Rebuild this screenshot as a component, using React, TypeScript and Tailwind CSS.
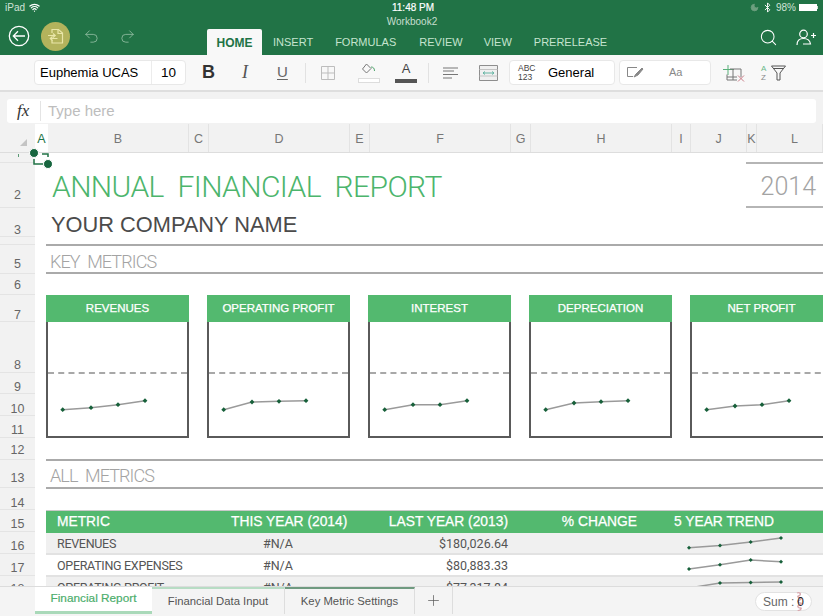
import React from "react";
import { Undo2, Redo2, Search, Plus, Bluetooth, Moon, Wifi } from "lucide-react";

const rowHeaders = [
  { label: "", h: "h-[10px]" },
  { label: "2", h: "h-[45px]", pb: "pb-[6px]" },
  { label: "3", h: "h-[29px]", pb: "pb-0" },
  { label: "", h: "h-[8px]" },
  { label: "5", h: "h-[29px]", pb: "pb-[3px]" },
  { label: "6", h: "h-[21px]", pb: "pb-[3px]" },
  { label: "7", h: "h-[27px]", pb: "pb-0" },
  { label: "8", h: "h-[51px]", pb: "pb-[1px]" },
  { label: "9", h: "h-[21px]", pb: "pb-0" },
  { label: "10", h: "h-[22px]", pb: "pb-0" },
  { label: "11", h: "h-[22px]", pb: "pb-[1px]" },
  { label: "12", h: "h-[22px]", pb: "pb-[3px]" },
  { label: "13", h: "h-[28px]", pb: "pb-[3px]" },
  { label: "14", h: "h-[22px]", pb: "pb-0" },
  { label: "15", h: "h-[22px]", pb: "pb-[1px]" },
  { label: "16", h: "h-[22px]", pb: "pb-[1px]" },
  { label: "17", h: "h-[22px]", pb: "pb-[1px]" },
  { label: "18", h: "h-[22px]" },
];

const columns = [
  { label: "A", w: "w-[13px]", active: true },
  { label: "B", w: "w-[141px]" },
  { label: "C", w: "w-[20px]" },
  { label: "D", w: "w-[141px]" },
  { label: "E", w: "w-[20px]" },
  { label: "F", w: "w-[141px]" },
  { label: "G", w: "w-[20px]" },
  { label: "H", w: "w-[141px]" },
  { label: "I", w: "w-[19px]" },
  { label: "J", w: "w-[56px]" },
  { label: "K", w: "w-[10px]" },
  { label: "L", w: "w-[66px] pl-[10px]" },
];

const xs = [16.7, 45, 72, 99];

const cards = [
  { title: "REVENUES", ys: [87.7, 85.7, 82.7, 78.7] },
  { title: "OPERATING PROFIT", ys: [87.7, 80, 79.3, 78.7] },
  { title: "INTEREST", ys: [87.7, 82.7, 82.7, 78.7] },
  { title: "DEPRECIATION", ys: [87.7, 81, 79.7, 78.7] },
  { title: "NET PROFIT", ys: [87.7, 84, 82.7, 78.7] },
];

const rows = [
  { name: "REVENUES", last: "$180,026.64", shade: true, ys: [14.7, 12.5, 9, 5] },
  { name: "OPERATING EXPENSES", last: "$80,883.33", shade: false, ys: [14, 9.7, 5, 6.7] },
  { name: "OPERATING PROFIT", last: "$77,317.84", shade: true, ys: [11, 6, 5.5, 5] },
];

const Spark = ({ points, className, size = 2.4 }: { points: number[][]; className: string; size?: number }) => (
  <svg className={className}>
    <polyline
      points={points.map((p) => p.join(",")).join(" ")}
      fill="none"
      stroke="#9a9a9a"
      strokeWidth="1.5"
    />
    {points.map(([x, y], i) => (
      <path
        key={i}
        d={`M${x - size} ${y}L${x} ${y - size}L${x + size} ${y}L${x} ${y + size}Z`}
        fill="#17603a"
      />
    ))}
  </svg>
);

const StatusBar = () => (
  <div className="grid h-[15px] grid-cols-3 items-center px-[5px] text-[10px] leading-none text-[#cfe3d6]">
    <div className="flex items-center gap-[4px]">
      <span>iPad</span>
      <Wifi size={11} strokeWidth={2.6} className="text-white" />
    </div>
    <div className="pl-[3px] text-center text-white [-webkit-text-stroke:0.2px_white]">11:48 PM</div>
    <div className="flex items-center justify-end gap-[3px]">
      <Moon size={9} strokeWidth={2} className="text-[#6d9f7f]" fill="#6d9f7f" />
      <Bluetooth size={11} strokeWidth={2} className="text-white" />
      <span>98%</span>
      <div className="flex items-center">
        <div className="h-[7px] w-[18px] bg-white" />
        <div className="h-[3px] w-[1px] bg-[#cfe3d6]" />
      </div>
    </div>
  </div>
);

const Ribbon = () => (
  <div className="h-[55px] bg-[#217346]">
    <StatusBar />
    <div className="h-[14px] pl-[1px] text-center text-[10px] leading-[13px] text-[#c7dfcf]">Workbook2</div>
    <div className="flex h-[26px] items-end">
      <div className="mb-[-3px] flex h-[44px] w-[207px] shrink-0 items-center self-end">
        <svg width="22" height="22" viewBox="0 0 22 22" fill="none" stroke="#fff" strokeWidth="1.3" className="ml-[8px]">
          <circle cx="11" cy="11" r="9.7" />
          <path d="M17 11H5.5M10 6.2 5.3 11l4.7 4.8" />
        </svg>
        <div className="ml-[11px] flex h-[29px] w-[29px] items-center justify-center rounded-full bg-[#b3b35c]">
          <svg width="17" height="17" viewBox="0 0 17 17" fill="none" stroke="#e9e6a8" strokeWidth="1.2">
            <path d="M5 5V1.5h6.5L15.5 5v10H5v-3" />
            <path d="M11 1.5V5.500h4.500" />
            <path d="M1 7.500h7M6 5.500l2.200 2-2.200 2M10.500 10.500h-7M5.500 8.500l-2.200 2 2.200 2" />
          </svg>
        </div>
        <Undo2 size={17} strokeWidth={1.1} className="ml-[13px] text-[#9cc4aa]" />
        <Redo2 size={17} strokeWidth={1.1} className="ml-[19px] text-[#9cc4aa]" />
      </div>
      <div className="flex h-[26px] w-[55px] items-center justify-center rounded-t-[2px] bg-[#f8f8f8] pt-[1px] text-[12px] font-bold text-[#217346]">
        HOME
      </div>
      <div className="flex h-[26px] items-center pt-[1px] text-[11px] text-[#c5e4cf]">
        <span className="ml-[11px]">INSERT</span>
        <span className="ml-[22px]">FORMULAS</span>
        <span className="ml-[23px]">REVIEW</span>
        <span className="ml-[21px]">VIEW</span>
        <span className="ml-[22px]">PRERELEASE</span>
      </div>
      <div className="mb-[8px] ml-auto flex items-center">
        <Search size={19} strokeWidth={1.3} className="text-white" />
        <svg width="20" height="17" viewBox="0 0 20 17" fill="none" stroke="#fff" strokeWidth="1.2" className="mr-[7px] ml-[18px]">
          <circle cx="7.500" cy="5" r="3.800" />
          <path d="M1 16c0-4 2.500-6.500 6.500-6.500S14 11.500 14.500 15H7M15 6.500h5M17.500 4v5" />
        </svg>
      </div>
    </div>
  </div>
);

const Toolbar = () => (
  <div className="flex h-[37px] items-center border-b-2 border-[#dedede] bg-[#f8f8f8] text-black">
    <div className="ml-[34px] flex h-[25px] w-[152px] items-center rounded-[4px] border border-[#e8e8e8] bg-white text-[13px]">
      <span className="w-[116px] pl-[5px]">Euphemia UCAS</span>
      <span className="h-full border-l border-[#ececec] pl-[9px] text-[13.500px] leading-[23px]">10</span>
    </div>
    <span className="ml-[16px] w-[13px] text-[18px] font-bold text-[#333]">B</span>
    <span className="ml-[27px] w-[10px] font-['Liberation_Serif',serif] text-[18px] text-[#555] italic">I</span>
    <span className="ml-[25px] w-[12px] text-[15px] text-[#666] underline underline-offset-2">U</span>
    <div className="ml-[16px] h-[20px] border-l border-[#e2e2e2]" />
    <svg width="14" height="14" viewBox="0 0 14 14" fill="none" stroke="#bdbdbd" className="ml-[15px]">
      <path d="M.5.5h13v13H.5zM7 .500v13M.5 7h13" />
    </svg>
    <div className="ml-[22px] flex w-[23px] flex-col items-center">
      <svg width="15" height="13" viewBox="0 0 15 13" fill="none" stroke="#777" strokeWidth="1">
        <path d="M5.500 1 1.500 6l4 4 4.500-4.500z" />
        <path d="M10 4c2 0 3.500 1 3.500 4" stroke="#4fa56c" />
      </svg>
      <div className="mt-[2px] h-[5px] w-[22px] border border-[#dddddd] bg-white" />
    </div>
    <div className="ml-[15px] flex w-[22px] flex-col items-center">
      <span className="text-[13px] leading-[14px] text-[#444]">A</span>
      <div className="mt-[3px] h-[4px] w-[22px] bg-[#555]" />
    </div>
    <div className="ml-[11px] h-[20px] border-l border-[#e2e2e2]" />
    <svg width="15" height="12" viewBox="0 0 15 12" fill="none" stroke="#777" className="ml-[14px]">
      <path d="M0 1h15M0 4h11M0 7.500h15M0 11h9" />
    </svg>
    <svg width="19" height="16" viewBox="0 0 19 16" fill="none" className="ml-[21px]">
      <path d="M.5.5h18v15H.5z" stroke="#8e8e8e" fill="#f0f0f0" />
      <path d="M.5 4.500h18M.5 11h18" stroke="#c4c4c4" />
      <path d="M4 8h11M4 8l2-1.500M4 8l2 1.500M15 8l-2-1.500M15 8l-2 1.500" stroke="#64b5a4" />
    </svg>
    <div className="ml-[11px] flex h-[25px] w-[106px] items-center rounded-[4px] border border-[#e8e8e8] bg-white">
      <span className="ml-[8px] w-[16px] text-[8.500px] leading-[8.500px] text-[#444]">ABC 123</span>
      <span className="ml-[14px] pt-[1px] text-[13px]">General</span>
    </div>
    <div className="ml-[4px] flex h-[25px] w-[92px] items-center rounded-[4px] border border-[#e8e8e8] bg-white">
      <svg width="17" height="11" viewBox="0 0 17 11" fill="none" stroke="#888" className="ml-[7px]">
        <path d="M10 .500H.5v9H6" />
        <path d="M7 10l2-3 6-6 1 1-5 6z" fill="#888" />
      </svg>
      <span className="ml-[25px] text-[11px] text-[#888]">Aa</span>
    </div>
    <svg width="23" height="18" viewBox="0 0 23 18" fill="none" className="ml-[11px]">
      <path d="M6 1v10M1 5.500h11" stroke="#58b079" />
      <path d="M8 5h11v8M5 11v-.500M5 11v5h10M5 13h10M11 5v11" stroke="#777" />
      <path d="M16 11.500l6 6M22 11.500l-6 6" stroke="#c77b85" />
    </svg>
    <div className="ml-[16px] flex w-[9px] flex-col text-[8px] leading-[9px]">
      <span className="text-[#6ab98a]">A</span>
      <span className="text-[#888]">Z</span>
    </div>
    <svg width="15" height="16" viewBox="0 0 15 16" fill="none" stroke="#555" className="ml-[1px]">
      <path d="M.5 1h14L9 8v7H6V8z" />
      <path d="M2 3.500h11" />
    </svg>
  </div>
);

const FormulaBar = () => (
  <div className="h-[32px] bg-[#f2f2f2] pt-[7px] pr-[7px] pl-[7px]">
    <div className="flex h-[24px] items-center rounded-[3px] bg-white">
      <span className="w-[33px] pl-[10px] font-['Liberation_Serif',serif] text-[17px] text-[#333] italic">fx</span>
      <span className="h-[20px] border-l border-[#e4e4e4] pl-[7px] text-[15px] leading-[20px] text-[#bdbdbd]">Type here</span>
    </div>
  </div>
);

const ColumnHeaders = () => (
  <div className="flex h-[29px] border-b border-[#dddddd] bg-[#f2f2f2]">
    <div className="flex w-[35px] shrink-0 items-end justify-end pr-[8px] pb-[6px]">
      <div className="h-0 w-0 border-b-[7px] border-l-[7px] border-b-[#c4c4c4] border-l-transparent" />
    </div>
    {columns.map((c) => (
      <div
        key={c.label}
        className={`${c.w} flex shrink-0 items-center justify-center pt-[2px] text-[12.500px] ${
          c.active ? "bg-white text-[#217346]" : "border-r border-[#e3e3e3] text-[#777]"
        }`}
      >
        {c.label}
      </div>
    ))}
  </div>
);

const RowHeaders = () => (
  <div className="w-[35px] shrink-0 bg-[#f2f2f2]">
    {rowHeaders.map((r, i) => (
      <div
        key={i}
        className={`${r.h} ${r.pb ?? "pb-[2px]"} flex items-end justify-center border-b border-[#e4e4e4] text-[12.500px] leading-[12px] text-[#666]`}
      >
        {r.label}
      </div>
    ))}
  </div>
);

const MetricCard = ({ title, ys }: { title: string; ys: number[] }) => (
  <div className="w-[143px] shrink-0">
    <div className="flex h-[27px] items-center justify-center bg-[#53b96f] text-[11.500px] text-white [-webkit-text-stroke:0.25px_white]">
      {title}
    </div>
    <div className="h-[116px] border-x-2 border-b-2 border-[#5a5a5a]">
      <div className="h-[52px] border-b-2 border-dashed border-[#a8a8a8]" />
      <Spark
        className="h-[62px] w-[139px]"
        points={xs.map((x, i) => [x - 2, ys[i] - 52])}
      />
    </div>
  </div>
);

const Sheet = () => (
  <div className="min-w-0 flex-1 bg-white">
    <div className="flex h-[55px] items-start">
      <div className="mt-[18px] ml-[17px] font-['Roboto',sans-serif] text-[30px] leading-[32px] font-light tracking-[-0.6px] [word-spacing:7px] whitespace-nowrap text-[#4cb56c]">
        ANNUAL FINANCIAL REPORT
      </div>
      <div className="mt-[9px] ml-auto flex h-[46px] w-[77px] items-center justify-end border-y-2 border-[#b5b5b5] pt-[3px] pr-[7px] font-['Roboto',sans-serif] text-[25px] font-light text-[#a3a3a3]">
        2014
      </div>
    </div>
    <div className="h-[29px] pl-[16px] text-[21.800px] leading-[34px] text-[#4b4b4b]">YOUR COMPANY NAME</div>
    <div className="mt-[7px] ml-[11px] h-[30px] border-y-2 border-[#aaaaaa] pl-[4px] font-['Roboto',sans-serif] text-[18px] leading-[31px] font-light tracking-[-0.9px] [word-spacing:4px] whitespace-nowrap text-[#a3a3a3]">
      KEY METRICS
    </div>
    <div className="mt-[21px] ml-[11px] flex gap-[18px]">
      {cards.map((c) => (
        <MetricCard key={c.title} title={c.title} ys={c.ys} />
      ))}
    </div>
    <div className="mt-[21px] ml-[11px] h-[30px] border-y-2 border-[#aaaaaa] pl-[4px] font-['Roboto',sans-serif] text-[18px] leading-[30px] font-light tracking-[-0.9px] [word-spacing:4px] whitespace-nowrap text-[#a3a3a3]">
      ALL METRICS
    </div>
    <div className="mt-[21px] ml-[11px]">
      <div className="flex h-[23px] items-center border-t border-[#c9c9c9] bg-[#53b96f] text-[13.800px] whitespace-nowrap text-white [-webkit-text-stroke:0.25px_white]">
        <span className="w-[185px] shrink-0 pl-[11px]">METRIC</span>
        <span className="w-[115px] shrink-0 text-right">THIS YEAR (2014)</span>
        <span className="w-[162px] shrink-0 text-right">LAST YEAR (2013)</span>
        <span className="w-[129px] shrink-0 text-right">% CHANGE</span>
        <span className="pl-[37px]">5 YEAR TREND</span>
      </div>
      {rows.map((r) => (
        <div
          key={r.name}
          className={`flex h-[22px] items-center border-b-2 border-[#e2e2e2] font-['Roboto',sans-serif] text-[12.500px] whitespace-nowrap text-[#555] ${
            r.shade ? "bg-[#f0f0f0]" : "bg-white"
          }`}
        >
          <span className="w-[185px] shrink-0 pt-[3px] pl-[11px] tracking-[-0.3px]">{r.name}</span>
          <span className="w-[115px] shrink-0 pt-[3px] pl-[32px]">#N/A</span>
          <span className="w-[162px] shrink-0 pt-[3px] text-right">{r.last}</span>
          <span className="w-[129px] shrink-0" />
          <Spark
            size={2}
            className="ml-[37px] h-[20px] w-[130px] shrink-0"
            points={[15, 46, 76.7, 107].map((x, i) => [x, r.ys[i]])}
          />
        </div>
      ))}
    </div>
  </div>
);

const TabBar = () => (
  <div className="flex h-[30px] items-stretch border-t border-[#dcdcdc] bg-[#f4f4f4] pb-[2px] text-[11.300px] text-[#555]">
    <div className="ml-[35px] flex w-[117px] items-center justify-center border-b-[3px] border-[#a9d9b9] bg-white text-[11.800px] text-[#4cae6c] [-webkit-text-stroke:0.2px_#4cae6c]">
      Financial Report
    </div>
    <div className="flex w-[133px] items-center justify-center border-t-2 border-r border-t-[#b7dcc4] border-r-[#dddddd]">
      Financial Data Input
    </div>
    <div className="flex w-[130px] items-center justify-center border-t-2 border-r border-t-[#6f9a80] border-r-[#dddddd]">
      Key Metric Settings
    </div>
    <div className="flex w-[38px] items-center justify-center border-r border-[#dddddd]">
      <Plus size={17} strokeWidth={1} className="text-[#555]" />
    </div>
    <div className="relative mt-[5px] mr-[11px] mb-[3px] ml-auto flex w-[57px] items-center justify-center rounded-full border border-[#e2e2e2] bg-white text-[12px] text-[#666]">
      Sum : <span className="relative z-10 ml-[3px] text-[#222]">0</span>
      <svg width="7" height="20" viewBox="0 0 7 20" fill="none" stroke="#d9a9b0" strokeWidth="1.300" className="absolute top-[-1px] left-[40px]">
        <path d="M1 1c3-1 4 1 3 2S1 4 2 5s4 0 3 2-4 1-3 3 4 0 3 2-4 1-3 3 4 0 3 2-3 1-3 2" />
      </svg>
    </div>
  </div>
);

export default function App() {
  return (
    <div className="relative flex h-[616px] w-[823px] flex-col overflow-hidden bg-white font-['Liberation_Sans',Arial,sans-serif]">
      <Ribbon />
      <Toolbar />
      <FormulaBar />
      <ColumnHeaders />
      <div className="flex min-h-0 flex-1 overflow-hidden">
        <RowHeaders />
        <Sheet />
      </div>
      <TabBar />
      {/* selection handles over cell A1 */}
      <svg width="24" height="22" viewBox="0 0 24 22" className="absolute top-[147px] left-[28px]">
        <path d="M14 7h6v3M6 12v5h14v-3" fill="none" stroke="#217346" strokeWidth="1.500" />
        <circle cx="6" cy="6" r="4.500" fill="#17663f" stroke="#fff" />
        <circle cx="20" cy="17" r="4.500" fill="#17663f" stroke="#fff" />
      </svg>
      <div className="absolute top-[154px] left-[18px] h-[3px] w-[1px] bg-[#5c9a76]" />
    </div>
  );
}
